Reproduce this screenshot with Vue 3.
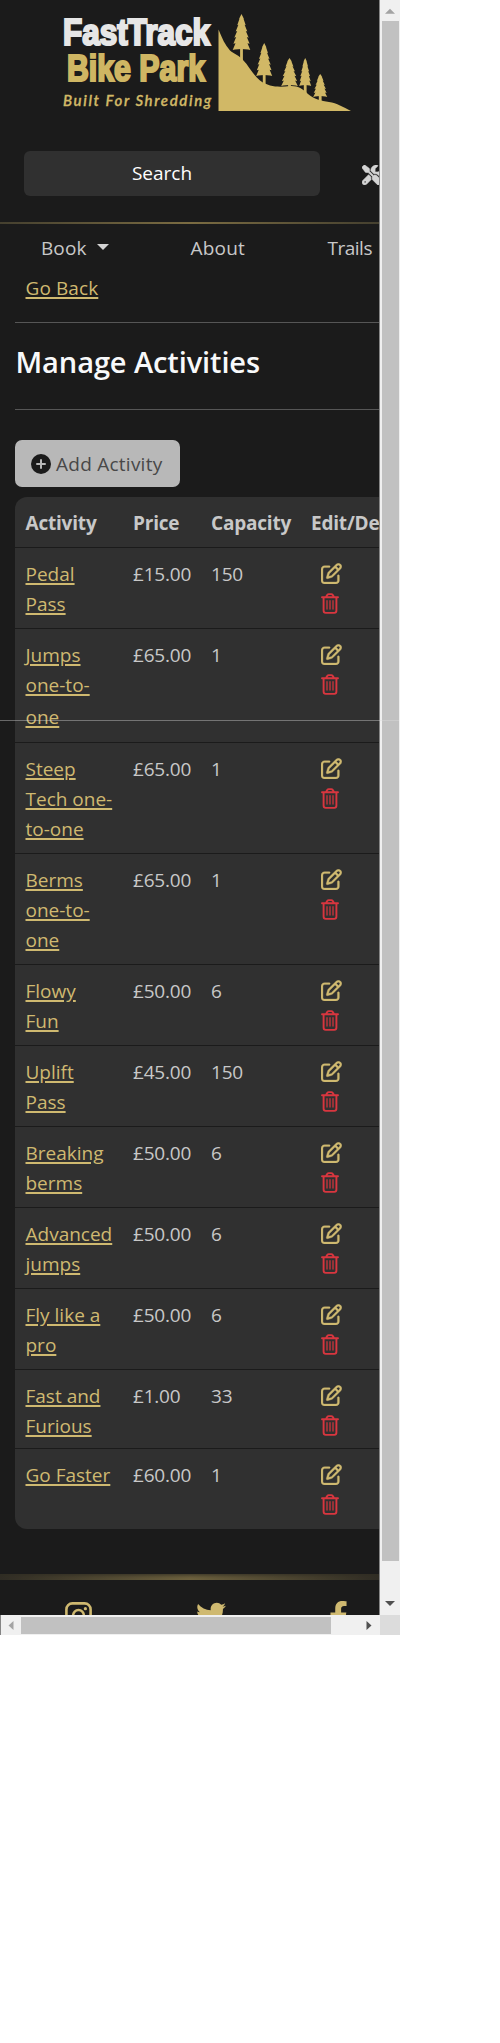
<script setup>
const rows = [
  { name: ['Pedal', 'Pass'], price: '£15.00', cap: '150' },
  { name: ['Jumps', 'one-to-', 'one'], price: '£65.00', cap: '1', size: 'jumps' },
  { name: ['Steep', 'Tech one-', 'to-one'], price: '£65.00', cap: '1', size: 'tall' },
  { name: ['Berms', 'one-to-', 'one'], price: '£65.00', cap: '1', size: 'tall' },
  { name: ['Flowy', 'Fun'], price: '£50.00', cap: '6' },
  { name: ['Uplift', 'Pass'], price: '£45.00', cap: '150' },
  { name: ['Breaking', 'berms'], price: '£50.00', cap: '6' },
  { name: ['Advanced', 'jumps'], price: '£50.00', cap: '6' },
  { name: ['Fly like a', 'pro'], price: '£50.00', cap: '6' },
  { name: ['Fast and', 'Furious'], price: '£1.00', cap: '33', size: 'short' },
  { name: ['Go Faster'], price: '£60.00', cap: '1', size: 'last' }
]

// Saw-edged conifer, widening from its tip and narrowing a little at the skirt
const tree = (x, top, base, hw) => {
  const widths = [0.3, 0.48, 0.66, 0.82, 0.92, 1]
  const right = []
  const left = []
  widths.forEach((w, i) => {
    const y = top + ((base - top) * (i + 1)) / widths.length
    right.push(`${x + hw * w},${y - 1}`, `${x + hw * w * 0.74},${y - 1.6}`)
    left.unshift(`${x - hw * w * 0.74},${y - 1.6}`, `${x - hw * w},${y - 1}`)
  })
  return [`${x},${top}`, ...right, `${x},${base - 2}`, ...left].join(' ')
}
const trees = [
  { x: 241.5, top: 14, base: 51, hw: 8.8, foot: 62 },
  { x: 264.2, top: 43, base: 77, hw: 8, foot: 86 },
  { x: 289.5, top: 58, base: 87, hw: 8.3, foot: 90 },
  { x: 305.2, top: 58, base: 87, hw: 6, foot: 93 },
  { x: 320.2, top: 74, base: 98, hw: 7, foot: 103 }
]
</script>

<template>
  <div class="window">
    <div class="body-row">
      <main class="page">
        <header>
          <svg class="logo" width="379" height="125" viewBox="0 0 379 125">
            <g class="brand" stroke-width="2.2">
              <text x="63" y="45" textLength="147" lengthAdjust="spacingAndGlyphs" fill="#e6e6e6" stroke="#e6e6e6">FastTrack</text>
              <text x="67" y="81" textLength="138" lengthAdjust="spacingAndGlyphs" fill="#cfb663" stroke="#cfb663">Bike Park</text>
            </g>
            <text class="tagline" x="63" y="105.500" textLength="148" lengthAdjust="spacing">Built For Shredding</text>
            <g fill="#d1b866">
              <path d="M218.5 29.5C222 38 225 45 230 50.5C234 54 239 55 243 60C249 66 253 75 260 80.500C270 88 281 87 290 86C298 85.500 303 89 308 94C314 99 321 101 329 102C337 103 343 107 351 111H218.500Z" />
              <g v-for="t in trees" :key="t.x">
                <polygon :points="tree(t.x, t.top, t.base, t.hw)" />
                <rect :x="t.x - 1.4" :y="t.base - 3" width="2.8" :height="t.foot - t.base + 3" />
              </g>
            </g>
          </svg>
          <div class="tools">
            <div class="search">Search</div>
            <svg class="wrench" width="20" height="20" viewBox="0 0 512 512" fill="#d4d4d4" stroke="#d4d4d4" stroke-width="14"><path d="M78.6 5C69.1-2.4 55.600-1.500 47 7L7 47c-8.500 8.500-9.400 22-2.100 31.600l80 104c4.500 5.900 11.600 9.400 19 9.400h54.100l109 109c-14.700 29-10 65.400 14.300 89.600l112 112c12.500 12.500 32.800 12.500 45.300 0l64-64c12.500-12.500 12.500-32.800 0-45.300l-112-112c-24.200-24.200-60.600-29-89.600-14.300l-109-109V104c0-7.500-3.500-14.500-9.400-19L78.600 5zM19.900 396.100C7.200 408.800 0 426.100 0 444.100C0 481.600 30.400 512 67.900 512c18 0 35.300-7.200 48-19.900L233.700 374.300c-7.800-20.900-9-43.600-3.600-65.100l-61.700-61.700L19.900 396.100zM512 144c0-10.500-1.100-20.700-3.200-30.500c-2.400-11.200-16.100-14.100-24.200-6l-63.900 63.900c-3 3-7.100 4.700-11.300 4.700H352c-8.800 0-16-7.200-16-16V102.600c0-4.200 1.700-8.300 4.700-11.300l63.900-63.900c8.100-8.100 5.200-21.800-6-24.200C388.700 1.100 378.500 0 368 0C288.500 0 224 64.500 224 144l0 .8 85.300 85.300c36-9.100 75.800 .5 104 28.700L429 274.500c49-23 83-72.800 83-130.500zM56 432a24 24 0 1 1 48 0 24 24 0 1 1 -48 0z" /></svg>
          </div>
          <div class="gold-line"></div>
          <nav>
            <span class="book">Book <i class="caret"></i></span>
            <span class="about">About</span>
            <span class="trails">Trails</span>
          </nav>
        </header>

        <a class="back">Go Back</a>
        <hr />
        <h1>Manage Activities</h1>
        <hr />
        <button class="add">
          <svg width="20" height="20" viewBox="0 0 20 20"><circle cx="10" cy="10" r="10" fill="#1b1b1b" /><path d="M10 6V14M6 10H14" stroke="#b8b8b8" stroke-width="2" stroke-linecap="round" /></svg>
          <span>Add Activity</span>
        </button>

        <section class="table">
          <div class="row head">
            <b>Activity</b><b>Price</b><b>Capacity</b><b class="edit-head">Edit/Delete</b>
          </div>
          <div v-for="r in rows" :key="r.name[0]" class="row" :class="r.size">
            <div class="name"><a v-for="l in r.name" :key="l">{{ l }}</a></div>
            <span>{{ r.price }}</span>
            <span>{{ r.cap }}</span>
            <div class="actions">
              <svg width="21" height="21" viewBox="0 0 512 512" fill="#cfb970" stroke="#cfb970" stroke-width="8"><path d="M441 58.900L453.100 71c9.400 9.400 9.400 24.600 0 33.900L424 134.100 377.900 88 407 58.900c9.400-9.400 24.600-9.400 33.900 0zM209.800 256.200L344 121.900 390.100 168 255.800 302.200c-2.900 2.900-6.500 5-10.400 6.100l-58.500 16.700 16.700-58.500c1.100-3.900 3.200-7.500 6.100-10.400zM373.100 25L175.800 222.200c-8.700 8.700-15 19.400-18.300 31.100l-28.600 100c-2.400 8.400-.1 17.400 6.100 23.600s15.200 8.500 23.600 6.100l100-28.600c11.800-3.400 22.500-9.700 31.100-18.300L487 138.900c28.100-28.100 28.100-73.700 0-101.800L474.900 25C446.800-3.100 401.200-3.100 373.100 25zM88 64C39.400 64 0 103.400 0 152V424c0 48.600 39.400 88 88 88H360c48.600 0 88-39.400 88-88V312c0-13.300-10.700-24-24-24s-24 10.700-24 24V424c0 22.100-17.900 40-40 40H88c-22.100 0-40-17.900-40-40V152c0-22.100 17.900-40 40-40H200c13.300 0 24-10.700 24-24s-10.700-24-24-24H88z" /></svg>
              <svg class="trash" width="18" height="21" viewBox="0 0 18 21" fill="none" stroke="#d9363f" stroke-linecap="round"><path d="M1 4.300H17M2.600 4.300V17.800Q2.600 19.900 4.700 19.900H13.300Q15.400 19.900 15.400 17.800V4.300M5 4L6.200 2Q6.800 1.100 7.800 1.100H10.200Q11.200 1.100 11.800 2L13 4" stroke-width="1.900" /><path d="M6 7.800V16M9 7.800V16M12 7.800V16" stroke-width="1.500" opacity=".8" /></svg>
            </div>
          </div>
        </section>

        <footer>
          <div class="gold-band"></div>
          <div class="social">
            <svg class="insta" width="27" height="27" viewBox="0 0 27 27" fill="none" stroke="#cfb970"><rect x="1.400" y="1.400" width="24.200" height="24.200" rx="6" stroke-width="2.600" /><circle cx="13.500" cy="13.500" r="5.400" stroke-width="2.500" /><circle cx="20.400" cy="6.700" r="1.600" fill="#cfb970" stroke="none" /></svg>
            <svg class="bird" width="30" height="30" viewBox="0 0 512 512" fill="#cfb970"><path d="M459.370 151.716c.325 4.548.325 9.097.325 13.645 0 138.720-105.583 298.558-298.558 298.558-59.452 0-114.680-17.219-161.137-47.106 8.447.974 16.568 1.299 25.340 1.299 49.055 0 94.213-16.568 130.274-44.832-46.132-.975-84.792-31.188-98.112-72.772 6.498.974 12.995 1.624 19.818 1.624 9.421 0 18.843-1.300 27.614-3.573-48.081-9.747-84.143-51.980-84.143-102.985v-1.299c13.969 7.797 30.214 12.670 47.431 13.319-28.264-18.843-46.781-51.005-46.781-87.391 0-19.492 5.197-37.360 14.294-52.954 51.655 63.675 129.300 105.258 216.365 109.807-1.624-7.797-2.599-15.918-2.599-24.040 0-57.828 46.782-104.934 104.934-104.934 30.213 0 57.502 12.670 76.670 33.137 23.715-4.548 46.456-13.320 66.599-25.340-7.798 24.366-24.366 44.833-46.132 57.827 21.117-2.273 41.584-8.122 60.426-16.243-14.292 20.791-32.161 39.308-52.628 54.253z" /></svg>
            <svg class="fb" width="19" height="30" viewBox="0 0 320 512" fill="#cfb970"><path d="M279.140 288l14.220-92.660h-88.910v-60.130c0-25.350 12.420-50.060 52.240-50.060h40.420V6.260S260.430 0 225.360 0c-73.220 0-121.080 44.380-121.080 124.720v70.620H22.890V288h81.390v224h100.170V288z" /></svg>
          </div>
        </footer>
      </main>
      <aside class="vbar">
        <svg width="20" height="21" viewBox="0 0 20 21"><path d="M5 13.800L10 8.800L15 13.800Z" fill="#a3a3a3" /></svg>
        <div class="vthumb"></div>
        <svg width="20" height="54" viewBox="0 0 20 54"><path d="M5 40H15L10 45Z" fill="#505050" /></svg>
      </aside>
    </div>
    <div class="hbar">
      <svg width="20" height="20" viewBox="0 0 20 20"><path d="M12.500 6V15L7.500 10.500Z" fill="#a3a3a3" /></svg>
      <div class="hthumb"></div>
      <svg width="49" height="20" viewBox="0 0 49 20"><path d="M35.500 6V15L40.500 10.500Z" fill="#505050" /></svg>
      <div class="corner"></div>
    </div>
    <div class="seam"></div>
  </div>
</template>

<style>
body { margin: 0; background: #fff; }
</style>

<style scoped>
* { box-sizing: border-box; }
.window { position: relative; width: 400px; height: 1635px; font: 19px/30px "Open Sans", "Noto Sans", sans-serif; letter-spacing: -0.2px; color: #c8c8c8; }
.body-row { display: flex; height: 1615px; }
.page { width: 380px; height: 1615px; overflow: hidden; background: #1b1b1b; border-right: 1px solid #858585; }
.logo { display: block; }
.brand { font: bold 36px "Liberation Sans", Arial, sans-serif; letter-spacing: 0; }
.tagline { font: italic 600 15px Lato, sans-serif; fill: #d1b866; stroke: #d1b866; stroke-width: .3px; }
.tools { display: flex; align-items: center; height: 97px; padding-left: 24px; }
.search { flex: none; width: 296px; height: 45px; padding-right: 20px; border-radius: 6px; background: #303030; color: #fff; text-align: center; line-height: 45px; letter-spacing: 0; }
.wrench { flex: none; margin-left: 42px; margin-top: 3px; }
.gold-line { height: 2px; background: linear-gradient(90deg, #45402f, #7b6c42 50%, #45402f); }
nav { display: flex; height: 48px; padding: 9px 0 0 41px; white-space: nowrap; }
.book { width: 149.5px; letter-spacing: .1px; }
.about { width: 137px; letter-spacing: .2px; }
.trails { letter-spacing: -.5px; }
.caret { display: inline-block; border: 6px solid transparent; border-top-color: #d4d4d4; border-bottom: 0; margin-left: 5px; vertical-align: 5px; }
a { color: #cfb970; text-decoration: underline; text-decoration-thickness: 2px; text-underline-offset: 2px; letter-spacing: 0; }
.back { display: block; width: max-content; height: 50px; margin-left: 25.5px; padding-top: 1px; letter-spacing: .1px; }
hr { height: 1px; margin: 0 0 0 15px; border: 0; background: #565656; }
h1 { height: 86px; margin: 0; padding: 19px 0 0 15.5px; color: #f8f9fa; font-size: 29px; line-height: 40px; font-weight: 600; letter-spacing: -.1px; }
.add { display: flex; align-items: center; gap: 5px; width: 165px; height: 47px; margin: 30px 0 10px 15px; padding: 0 0 0 16px; border: 0; border-radius: 7px; background: #b8b8b8; color: #484848; font: inherit; letter-spacing: .25px; white-space: nowrap; }
.table { width: 430px; margin-left: 15px; background: #303030; border-radius: 12px; overflow: hidden; }
.row { display: grid; grid-template-columns: 107.5px 78px 100px 130px; height: 81px; padding: 11px 0 0 10.5px; border-bottom: 1px solid #1b1b1b; align-content: start; }
.head { height: 51px; }
.edit-head { white-space: nowrap; }
.tall { height: 111px; }
.jumps { height: 114px; }
.jumps .name a:last-child { margin-top: 2px; }
.short { height: 79px; }
.last { height: 80px; border-bottom: 0; }
.name { display: flex; flex-direction: column; align-items: flex-start; white-space: nowrap; }
.actions { display: flex; flex-direction: column; gap: 9px; padding: 4px 0 0 9.5px; }
.trash { margin-left: .5px; }
footer { margin-top: 45px; }
.gold-band { height: 6px; background: linear-gradient(90deg, #302d25, #6f633f 50%, #302d25); box-shadow: inset 0 5px 4px -4px #302d22; }
.social { display: flex; align-items: flex-start; padding: 20px 0 0 65px; }
.insta { margin-top: 2px; }
.bird { margin-left: 104px; }
.fb { margin: 1px 0 0 103px; flex: none; }
.vbar { width: 20px; background: #f0f0f0; }
.vbar svg { display: block; }
.vthumb { width: 17px; height: 1540px; margin-left: 2px; background: #c1c1c1; }
.hbar { display: flex; height: 20px; background: #f0f0f0; border-left: 1px solid #858585; }
.hthumb { width: 310px; height: 17px; margin-top: 2px; background: #c1c1c1; }
.corner { width: 20px; height: 20px; background: #dcdcdc; }
.seam { position: absolute; left: 0; top: 720px; width: 399px; height: 1px; background: rgba(220, 220, 220, .4); }
</style>
